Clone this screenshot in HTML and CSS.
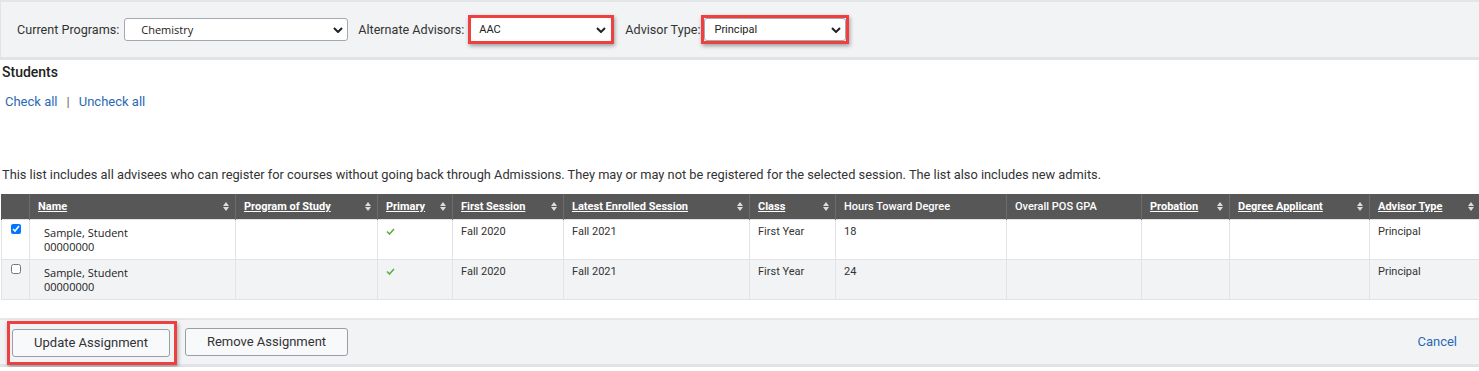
FILE: index.html
```html
<!DOCTYPE html>
<html lang="en">
<head>
    <meta charset="UTF-8">
    <title>Advisor Assignment</title>
    <link rel="stylesheet" href="styles.css">
</head>
<body>
    <div class="filter-bar">
        <label class="filter-label lbl-programs">Current Programs:</label>
        <span class="select-box sel-programs">
            <select class="font-alt"><option>Chemistry</option></select>
            <svg class="chevron" viewBox="0 0 10 6" width="10" height="6"><path d="M1 1l4 4 4-4" fill="none" stroke="#222" stroke-width="2"/></svg>
        </span>
        <label class="filter-label lbl-alternate">Alternate Advisors:</label>
        <span class="highlight hl-alternate">
            <span class="select-box sel-alternate">
                <select><option>AAC</option></select>
                <svg class="chevron" viewBox="0 0 10 6" width="10" height="6"><path d="M1 1l4 4 4-4" fill="none" stroke="#222" stroke-width="2"/></svg>
            </span>
        </span>
        <label class="filter-label lbl-type">Advisor Type:</label>
        <span class="highlight hl-type">
            <span class="select-box sel-type">
                <select><option>Principal</option></select>
                <svg class="chevron" viewBox="0 0 10 6" width="10" height="6"><path d="M1 1l4 4 4-4" fill="none" stroke="#222" stroke-width="2"/></svg>
            </span>
        </span>
    </div>

    <h3 class="section-title">Students</h3>
    <div class="check-links">
        <a href="#">Check all</a><span class="sep">|</span><a href="#">Uncheck all</a>
    </div>

    <p class="list-note">This list includes all advisees who can register for courses without going back through Admissions. They may or may not be registered for the selected session. The list also includes new admits.</p>

    <table class="students">
        <colgroup>
            <col style="width:28px"><col style="width:206px"><col style="width:142px"><col style="width:75px">
            <col style="width:111px"><col style="width:186px"><col style="width:86px"><col style="width:171px">
            <col style="width:135px"><col style="width:88px"><col style="width:140px"><col style="width:110px">
        </colgroup>
        <thead>
            <tr>
                <th></th>
                <th class="sortable"><a href="#">Name</a></th>
                <th class="sortable"><a href="#">Program of Study</a></th>
                <th class="sortable"><a href="#">Primary</a></th>
                <th class="sortable"><a href="#">First Session</a></th>
                <th class="sortable"><a href="#">Latest Enrolled Session</a></th>
                <th class="sortable"><a href="#">Class</a></th>
                <th>Hours Toward Degree</th>
                <th>Overall POS GPA</th>
                <th class="sortable"><a href="#">Probation</a></th>
                <th class="sortable"><a href="#">Degree Applicant</a></th>
                <th class="sortable"><a href="#">Advisor Type</a></th>
            </tr>
        </thead>
        <tbody>
            <tr>
                <td class="cb"><input type="checkbox" checked></td>
                <td class="name font-alt">Sample, Student<br>00000000</td>
                <td></td>
                <td><svg class="check" viewBox="0 0 9 7" width="9" height="7"><path d="M1 3.5l2.5 2.5L8 1" fill="none" stroke="#5fae3c" stroke-width="1.6"/></svg></td>
                <td>Fall 2020</td>
                <td>Fall 2021</td>
                <td>First Year</td>
                <td>18</td>
                <td></td>
                <td></td>
                <td></td>
                <td>Principal</td>
            </tr>
            <tr class="alt">
                <td class="cb"><input type="checkbox"></td>
                <td class="name font-alt">Sample, Student<br>00000000</td>
                <td></td>
                <td><svg class="check" viewBox="0 0 9 7" width="9" height="7"><path d="M1 3.5l2.5 2.5L8 1" fill="none" stroke="#5fae3c" stroke-width="1.6"/></svg></td>
                <td>Fall 2020</td>
                <td>Fall 2021</td>
                <td>First Year</td>
                <td>24</td>
                <td></td>
                <td></td>
                <td></td>
                <td>Principal</td>
            </tr>
        </tbody>
    </table>

    <div class="action-bar">
        <span class="highlight hl-update"><button class="btn">Update Assignment</button></span>
        <button class="btn btn-remove">Remove Assignment</button>
        <a href="#" class="cancel">Cancel</a>
    </div>
</body>
</html>
```

FILE: styles.css
```css
* {
    margin: 0;
    padding: 0;
    box-sizing: border-box;
}

body {
    font-family: Roboto, "Liberation Sans", sans-serif;
    font-size: 13px;
    color: #333;
    background-color: #fff;
    width: 1479px;
}

a {
    color: #2a6ab5;
    text-decoration: none;
}

.font-alt {
    font-family: "Open Sans", "DejaVu Sans", sans-serif;
}

/* Filter bar */
.filter-bar {
    display: flex;
    align-items: center;
    height: 60px;
    padding-left: 16px;
    background-color: #f2f3f5;
    border-top: 2px solid #e4e5e8;
    border-bottom: 3px solid #e2e3e6;
    border-left: 1px solid #e2e3e6;
}

.filter-label {
    color: #333;
    font-size: 12.6px;
    white-space: nowrap;
}

.lbl-programs { margin-right: 5px; }
.lbl-alternate { margin-left: 10px; margin-right: 4px; }
.lbl-type { margin-left: 11px; margin-right: 1px; }

.select-box {
    position: relative;
    display: inline-block;
}

.select-box select {
    appearance: none;
    -webkit-appearance: none;
    display: block;
    height: 23px;
    background-color: #fff;
    border: 1px solid #a6aab0;
    border-radius: 3px;
    font-family: Roboto, "Liberation Sans", sans-serif;
    font-size: 11px;
    color: #222;
    outline: none;
}

.select-box select.font-alt {
    font-family: "Open Sans", "DejaVu Sans", sans-serif;
}

.chevron {
    position: absolute;
    right: 5px;
    top: 9px;
    pointer-events: none;
}

.sel-programs select { width: 224px; padding-left: 16px; }
.sel-alternate select { width: 140px; padding-left: 7px; border-color: #fff; }
.sel-type select { width: 142px; padding-left: 9px; }

.highlight {
    display: inline-block;
    border: 3px solid #ee4040;
    box-shadow: 1px 2px 4px rgba(0, 0, 0, 0.35);
}

/* Students section */
.section-title {
    font-size: 14px;
    font-weight: 500;
    color: #222;
    margin-top: 3px;
    margin-left: 2px;
    line-height: 18px;
}

.check-links {
    margin-top: 13px;
    margin-left: 5px;
    line-height: 16px;
}

.check-links .sep {
    color: #666;
    margin: 0 9px;
}

.list-note {
    margin-top: 57px;
    margin-left: 2px;
    font-size: 12.8px;
    line-height: 16px;
    color: #333;
}

/* Table */
.students {
    margin-top: 11px;
    margin-left: 1px;
    width: 1478px;
    table-layout: fixed;
    border-collapse: collapse;
    font-size: 11px;
}

.students th {
    height: 25px;
    background-color: #575757;
    color: #fff;
    font-weight: 500;
    text-align: left;
    padding: 0 8px;
    border-left: 1px solid #6b6b6b;
    white-space: nowrap;
    position: relative;
}

.students th:first-child {
    border-left: 1px solid #575757;
}

.students th a {
    color: #fff;
    font-weight: 700;
    text-decoration: underline;
}

.students th.sortable::after {
    content: "";
    position: absolute;
    right: 6px;
    top: 8px;
    width: 0;
    height: 0;
    border-left: 3.5px solid transparent;
    border-right: 3.5px solid transparent;
    border-bottom: 4px solid #ddd;
}

.students th.sortable::before {
    content: "";
    position: absolute;
    right: 6px;
    top: 13px;
    width: 0;
    height: 0;
    border-left: 3.5px solid transparent;
    border-right: 3.5px solid transparent;
    border-top: 4px solid #ddd;
}

.students td {
    height: 40px;
    vertical-align: top;
    padding: 5px 8px 0;
    line-height: 14px;
    border: 1px solid #e1e3e6;
    color: #333;
}

.students tr.alt td {
    background-color: #f2f3f5;
}

.students td.cb {
    padding: 4px 0 0 9px;
}

.students td.cb input {
    width: 10px;
    height: 10px;
    margin: 0;
}

.students td.name {
    padding-left: 14px;
    padding-top: 6px;
    color: #222;
}

/* Bottom bar */
.action-bar {
    display: flex;
    align-items: center;
    margin-top: 18px;
    height: 49px;
    padding-left: 7px;
    background-color: #f2f3f5;
    border-top: 2px solid #e6e7ea;
    border-bottom: 3px solid #e2e3e6;
}

.hl-update {
    padding: 5px 4px 5px 2px;
    margin-top: 2px;
}

.btn {
    height: 28px;
    background-color: #f8f9fb;
    border: 1px solid #9a9ea6;
    border-radius: 3px;
    font-family: Roboto, "Liberation Sans", sans-serif;
    font-size: 13px;
    color: #333;
    cursor: pointer;
}

.hl-update .btn {
    width: 158px;
}

.btn-remove {
    width: 163px;
    margin-left: 8px;
}

.cancel {
    margin-left: auto;
    margin-right: 22px;
    font-size: 13px;
}
```
